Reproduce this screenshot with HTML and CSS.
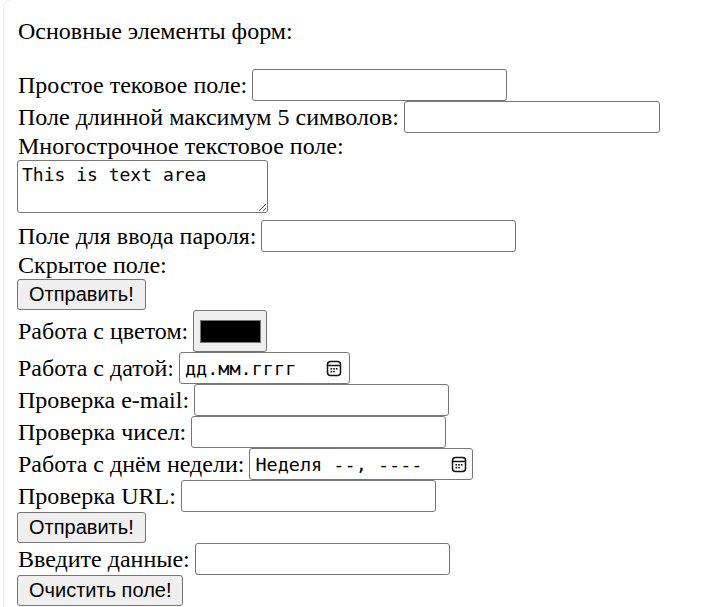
FILE: index.html
```html
<!DOCTYPE html>
<html lang="ru">
<head>
<meta charset="utf-8">
<title>Основные элементы форм</title>
<link rel="stylesheet" href="styles.css">
</head>
<body>
<div class="frame">
  <form class="form">
    <div class="title">Основные элементы форм:</div>

    <div class="row row-input">
      <span class="label">Простое тековое поле:</span>
      <input class="field" type="text">
    </div>
    <div class="row row-input">
      <span class="label">Поле длинной максимум 5 символов:</span>
      <input class="field field-wide" type="text" maxlength="5">
    </div>
    <div class="row row-text">
      <span class="label">Многострочное текстовое поле:</span>
    </div>
    <div class="row row-area">
      <textarea class="area">This is text area</textarea>
    </div>
    <div class="row row-input">
      <span class="label">Поле для ввода пароля:</span>
      <input class="field" type="password">
    </div>
    <div class="row row-text">
      <span class="label">Скрытое поле:</span>
      <input type="hidden" name="secret" value="1">
    </div>
    <div class="row row-button">
      <button class="btn" type="button">Отправить!</button>
    </div>

    <div class="row row-color">
      <span class="label">Работа с цветом:</span>
      <span class="color-box"><span class="color-swatch"></span></span>
    </div>
    <div class="row row-input">
      <span class="label">Работа с датой:</span>
      <span class="picker picker-date">
        <span class="picker-text">дд.мм.гггг</span>
        <svg class="cal" width="16" height="17" viewBox="0 0 16 17" aria-hidden="true">
          <rect x="1.5" y="1.5" width="13" height="14" rx="3" fill="none" stroke="#111" stroke-width="1.5"/>
          <line x1="1.5" y1="5.5" x2="14.5" y2="5.5" stroke="#111" stroke-width="1.5"/>
          <rect x="4.5" y="8" width="1.6" height="1.6" fill="#111"/>
          <rect x="7.2" y="8" width="1.6" height="1.6" fill="#111"/>
          <rect x="9.9" y="8" width="1.6" height="1.6" fill="#111"/>
          <rect x="4.5" y="10.8" width="1.6" height="1.6" fill="#111"/>
          <rect x="7.2" y="10.8" width="1.6" height="1.6" fill="#111"/>
        </svg>
      </span>
    </div>
    <div class="row row-input">
      <span class="label">Проверка e-mail:</span>
      <input class="field" type="email">
    </div>
    <div class="row row-input">
      <span class="label">Проверка чисел:</span>
      <input class="field" type="text" inputmode="numeric">
    </div>
    <div class="row row-input">
      <span class="label">Работа с днём недели:</span>
      <span class="picker picker-week">
        <span class="picker-text">Неделя --, ----</span>
        <svg class="cal" width="16" height="17" viewBox="0 0 16 17" aria-hidden="true">
          <rect x="1.5" y="1.5" width="13" height="14" rx="3" fill="none" stroke="#111" stroke-width="1.5"/>
          <line x1="1.5" y1="5.5" x2="14.5" y2="5.5" stroke="#111" stroke-width="1.5"/>
          <rect x="4.5" y="8" width="1.6" height="1.6" fill="#111"/>
          <rect x="7.2" y="8" width="1.6" height="1.6" fill="#111"/>
          <rect x="9.9" y="8" width="1.6" height="1.6" fill="#111"/>
          <rect x="4.5" y="10.8" width="1.6" height="1.6" fill="#111"/>
          <rect x="7.2" y="10.8" width="1.6" height="1.6" fill="#111"/>
        </svg>
      </span>
    </div>
    <div class="row row-input">
      <span class="label">Проверка URL:</span>
      <input class="field" type="url">
    </div>
    <div class="row row-button">
      <button class="btn" type="button">Отправить!</button>
    </div>
    <div class="row row-input">
      <span class="label">Введите данные:</span>
      <input class="field" type="text">
    </div>
    <div class="row row-button">
      <button class="btn" type="reset">Очистить поле!</button>
    </div>
  </form>
</div>
</body>
</html>
```

FILE: styles.css
```css
html, body {
  margin: 0;
  padding: 0;
  background: #ffffff;
}

body {
  font-family: "Liberation Serif", "Times New Roman", serif;
  font-size: 24px;
  color: #000;
  overflow: hidden;
}

.frame {
  margin-left: 3px;
  margin-top: -1px;
  border-left: 1px solid #ebebeb;
  border-top: 1px solid #ebebeb;
  border-top-left-radius: 9px;
  min-height: 620px;
  padding-left: 13px;
}

.form {
  display: flex;
  flex-direction: column;
  padding-top: 18px;
}

.title {
  height: 27px;
  line-height: 27px;
  margin-bottom: 24px;
  padding-left: 1px;
}

.row {
  display: flex;
  align-items: center;
  gap: 5px;
}

.label {
  line-height: 27px;
  white-space: nowrap;
  padding-left: 1px;
}

.row-input { height: 32px; }
.row-text { height: 27px; }
.row-button { height: 31px; }
.row-color { height: 42px; }
.row-area {
  height: 60px;
  align-items: flex-start;
}

.field {
  box-sizing: border-box;
  width: 255px;
  height: 32px;
  margin: 0;
  padding: 2px 3px;
  border: 1px solid #767676;
  border-radius: 3px;
  background: #fff;
  font-family: "Liberation Sans", Arial, sans-serif;
  font-size: 20px;
}

.field-wide { width: 256px; }

.area {
  box-sizing: border-box;
  width: 251px;
  height: 53px;
  margin: 0;
  padding: 3px 4px;
  border: 1px solid #767676;
  border-radius: 3px;
  font-family: "DejaVu Sans Mono", "Liberation Mono", monospace;
  font-size: 18px;
  line-height: 22px;
  color: #000;
}

.btn {
  box-sizing: border-box;
  height: 31px;
  margin: 0;
  padding: 0 11px;
  border: 1px solid #767676;
  border-radius: 3px;
  background: #efefef;
  font-family: "Liberation Sans", Arial, sans-serif;
  font-size: 20px;
  color: #000;
}

.color-box {
  box-sizing: border-box;
  width: 74px;
  height: 42px;
  display: flex;
  align-items: center;
  justify-content: center;
  border: 1px solid #767676;
  border-radius: 3px;
  background: #efefef;
}

.color-swatch {
  box-sizing: border-box;
  width: 61px;
  height: 23px;
  background: #000;
  border: 1px solid #777;
}

.picker {
  box-sizing: border-box;
  height: 32px;
  display: flex;
  align-items: center;
  justify-content: space-between;
  border: 1px solid #767676;
  border-radius: 3px;
  background: #fff;
  padding: 0 7px 0 5px;
}

.picker-date { width: 171px; }
.picker-week { width: 224px; padding-right: 5px; }

.picker-text {
  font-family: "DejaVu Sans Mono", "Liberation Mono", monospace;
  font-size: 18.5px;
  white-space: pre;
}

.cal {
  display: block;
  flex: none;
}
```
